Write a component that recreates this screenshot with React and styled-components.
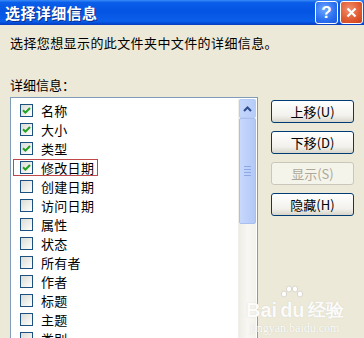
import React from 'react'
import styled, { createGlobalStyle } from 'styled-components'

const Global = createGlobalStyle`
html, body { margin: 0; padding: 0; background: #ECE9D8; }
body { font-family: "Noto Sans CJK SC", "Liberation Sans", sans-serif; }
`

const Window = styled.div`
position: relative;
width: 364px;
height: 338px;
overflow: hidden;
background: #ECE9D8;
color: #000;
`

const TitleBar = styled.div`
height: 25px;
display: flex;
align-items: center;
justify-content: space-between;
padding: 0 1px 0 5px;
background: linear-gradient(#3A8BF7 0%, #0A5EE8 10%, #0554E3 45%, #0A5FEA 85%, #0346CF 95%, #0B3FB5 100%);
`

const TitleText = styled.div`
color: #fff;
font-weight: 700;
font-size: 15px;
letter-spacing: 0.4px;
text-shadow: 1px 1px 0 #0C2E8A;
`

const Caps = styled.div`
display: flex;
gap: 2px;
`

const CapButton = styled.div`
width: 21px;
height: 21px;
border: 1px solid #fff;
border-radius: 3px;
display: flex;
align-items: center;
justify-content: center;
color: #fff;
font-family: "Liberation Sans", sans-serif;
font-weight: 700;
font-size: 17px;
background: ${p => p.$close
  ? 'radial-gradient(circle at 40% 35%, #F09070 0%, #E0582E 60%, #C8401C 100%)'
  : 'radial-gradient(circle at 40% 35%, #6EA6FF 0%, #2A6FF0 60%, #1E58D8 100%)'};
`

const Body = styled.div`
padding: 10px 0 0 10px;
`

const Desc = styled.div`
font-size: 13px;
line-height: 16px;
letter-spacing: 0.4px;
`

const Label = styled.div`
margin-top: 26px;
font-size: 13px;
line-height: 16px;
`

const Main = styled.div`
display: flex;
gap: 13px;
margin-top: 4px;
`

const ListBox = styled.div`
position: relative;
width: 246px;
height: 260px;
border: 1px solid #7F9DB9;
background: #fff;
display: flex;
`

const Items = styled.div`
flex: 1;
padding: 3px 0 0 2px;
display: flex;
flex-direction: column;
align-items: flex-start;
`

const Row = styled.div`
display: flex;
align-items: center;
height: 15px;
margin: 1px 0;
padding: 0 3px 0 6px;
border: 1px solid ${p => (p.$marked ? '#C04848' : 'transparent')};
gap: 8px;
font-size: 13px;
line-height: 15px;
letter-spacing: 0.3px;
`

const Box = styled.span`
width: 11px;
height: 11px;
border: 1px solid #1C5180;
background: linear-gradient(135deg, #DCDCD7 0%, #F0F0EC 60%, #FFFFFF 100%);
display: flex;
align-items: center;
justify-content: center;
`

const Scroll = styled.div`
width: 17px;
margin: 1px 1px 0 0;
display: flex;
flex-direction: column;
background: linear-gradient(90deg, #EEEDE5, #F8F7F3 50%, #F3F1EA);
border-left: 1px solid #F0EFE8;
`

const Arrow = styled.div`
height: 17px;
border: 1px solid #B8CBF4;
border-radius: 2px;
background: linear-gradient(90deg, #C4D6FC, #B6CCF8);
display: flex;
align-items: center;
justify-content: center;
`

const Thumb = styled.div`
height: 104px;
border: 1px solid #A8BFF0;
border-radius: 2px;
background: linear-gradient(90deg, #C8D8FC, #BCD0FA 50%, #B4C8F6);
display: flex;
flex-direction: column;
align-items: center;
justify-content: center;
gap: 2px;
`

const Grip = styled.span`
width: 7px;
height: 1px;
background: #8EA8E4;
`

const Buttons = styled.div`
display: flex;
flex-direction: column;
gap: 8px;
padding-top: 3px;
`

const Button = styled.div`
width: 81px;
height: 21px;
border: 1px solid ${p => (p.$disabled ? '#C9C7BA' : '#003C74')};
border-radius: 3px;
background: ${p => (p.$disabled ? '#F5F4EA' : 'linear-gradient(#FFFFFF, #F2F1EC 70%, #D8D5CA)')};
color: ${p => (p.$disabled ? '#ACA899' : '#000')};
display: flex;
align-items: center;
justify-content: center;
font-size: 13px;
`

const Watermark = styled.div`
position: absolute;
left: 246px;
top: 285px;
display: flex;
flex-direction: column;
align-items: center;
color: rgba(255, 255, 255, 0.95);
text-shadow: 0 0 1px rgba(190, 188, 180, 0.7);
pointer-events: none;
`

const Mark = styled.div`
font-family: "Liberation Sans", sans-serif;
font-weight: 700;
font-size: 20px;
line-height: 22px;
display: flex;
align-items: flex-end;
gap: 3px;
`

const Du = styled.span`
display: flex;
flex-direction: column;
align-items: center;
`

const Small = styled.div`
font-family: "Liberation Serif", serif;
font-size: 12px;
line-height: 14px;
`

const items = [
  ['名称', true], ['大小', true], ['类型', true], ['修改日期', true, true],
  ['创建日期'], ['访问日期'], ['属性'], ['状态'], ['所有者'], ['作者'],
  ['标题'], ['主题'], ['类别'],
]

const Check = () => (
  <svg width="9" height="9" viewBox="0 0 9 9">
    <path d="M1 4.2 L3.4 6.6 L8 2" fill="none" stroke="#21A121" strokeWidth="2" />
  </svg>
)

const Paw = () => (
  <svg width="24" height="14" viewBox="0 0 24 14">
    <g fill="#fff" stroke="#D0CEC6" strokeWidth="0.8">
      <ellipse cx="4" cy="9" rx="2.6" ry="3" />
      <ellipse cx="9" cy="4" rx="2.6" ry="3" />
      <ellipse cx="15" cy="4" rx="2.6" ry="3" />
      <ellipse cx="20" cy="9" rx="2.6" ry="3" />
    </g>
  </svg>
)

export default function App() {
  return (
    <Window>
      <Global />
      <TitleBar>
        <TitleText>选择详细信息</TitleText>
        <Caps>
          <CapButton>?</CapButton>
          <CapButton $close>
            <svg width="11" height="11" viewBox="0 0 11 11">
              <path d="M1.5 1.5 L9.5 9.5 M9.5 1.5 L1.5 9.5" stroke="#fff" strokeWidth="2.2" />
            </svg>
          </CapButton>
        </Caps>
      </TitleBar>
      <Body>
        <Desc>选择您想显示的此文件夹中文件的详细信息。</Desc>
        <Label>详细信息：</Label>
        <Main>
          <ListBox>
            <Items>
              {items.map(([name, on, marked]) => (
                <Row key={name} $marked={marked}>
                  <Box>{on && <Check />}</Box>
                  {name}
                </Row>
              ))}
            </Items>
            <Scroll>
              <Arrow>
                <svg width="9" height="6" viewBox="0 0 9 6">
                  <path d="M1 5 L4.5 1.5 L8 5" fill="none" stroke="#2D4D8C" strokeWidth="2" />
                </svg>
              </Arrow>
              <Thumb>
                <Grip /><Grip /><Grip /><Grip />
              </Thumb>
            </Scroll>
          </ListBox>
          <Buttons>
            <Button>上移(U)</Button>
            <Button>下移(D)</Button>
            <Button $disabled>显示(S)</Button>
            <Button>隐藏(H)</Button>
          </Buttons>
        </Main>
      </Body>
      <Watermark>
        <Mark>
          Bai
          <Du><Paw />du</Du>
          <span style={{ fontSize: 18 }}>经验</span>
        </Mark>
        <Small>jingyan.baidu.com</Small>
      </Watermark>
    </Window>
  )
}
